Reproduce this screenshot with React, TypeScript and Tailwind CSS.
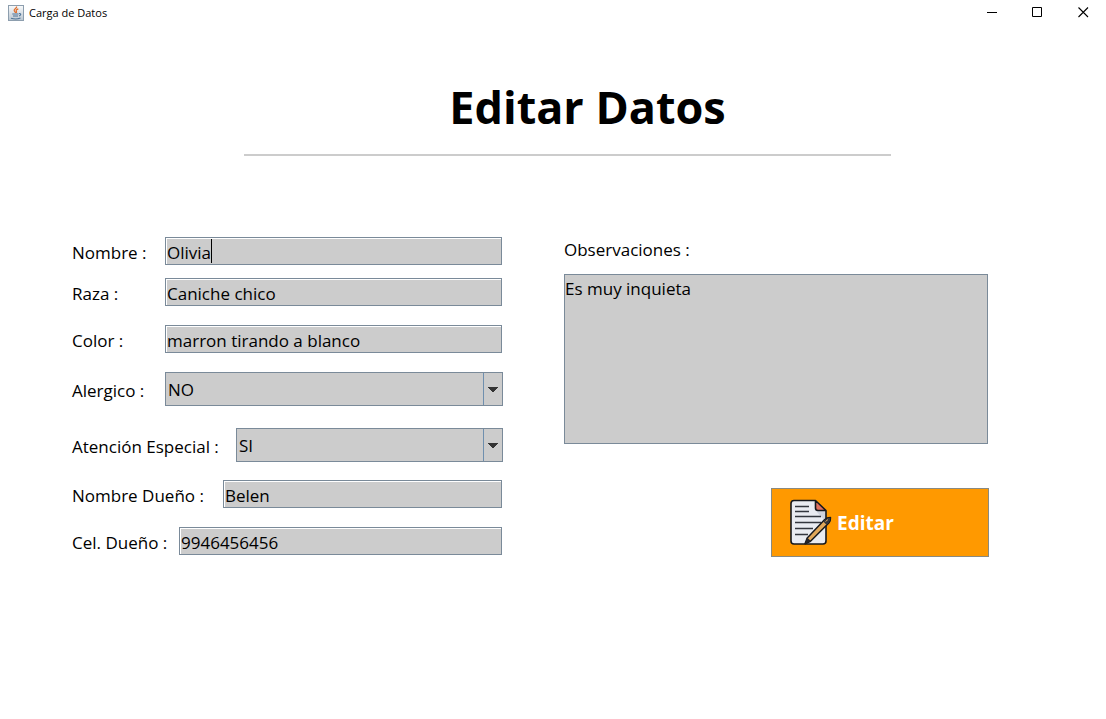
import type { ReactNode } from "react";

const fieldClass =
  "block h-7 w-full min-w-0 border border-[#7a8a99] bg-[#cccccc] px-px pt-[2px] shadow-[inset_1px_1px_0_#ffffff] outline-none";

type RowProps = {
  id: string;
  label: string;
  labelWidth: string;
  className?: string;
  children: ReactNode;
};

function Row({ id, label, labelWidth, className = "", children }: RowProps) {
  return (
    <div className={`flex items-center ${className}`}>
      <label htmlFor={id} className={`shrink-0 whitespace-nowrap pt-[4px] ${labelWidth}`}>
        {label}
      </label>
      <div className="relative min-w-0 flex-1">{children}</div>
    </div>
  );
}

function TextField({ id, value }: { id: string; value: string }) {
  return (
    <div className="pr-px">
      <input id={id} type="text" defaultValue={value} className={fieldClass} />
    </div>
  );
}

function SelectField({ id, value }: { id: string; value: string }) {
  return (
    <>
      <select
        id={id}
        defaultValue={value}
        className="block h-[34px] w-full appearance-none border border-[#7a8a99] bg-[#cccccc] pt-[2px] pr-6 pl-[2px] outline-none"
      >
        <option>NO</option>
        <option>SI</option>
      </select>
      <span className="pointer-events-none absolute inset-y-px right-px flex w-[19px] items-center justify-center border-l border-[#6f8fae]">
        <svg width="10" height="5" viewBox="0 0 10 5" shapeRendering="crispEdges" aria-hidden="true">
          <path d="M0 0h10v1h-1v1h-1v1h-1v1h-1v1h-2v-1h-1v-1h-1v-1h-1v-1h-1z" fill="#333333" />
        </svg>
      </span>
    </>
  );
}

function JavaIcon() {
  return (
    <svg width="16" height="16" viewBox="0 0 16 16" fill="none" aria-hidden="true">
      <defs>
        <linearGradient id="tile" x1="0" y1="0" x2="0" y2="1">
          <stop offset="0" stopColor="#fafbfc" />
          <stop offset="1" stopColor="#b9c5d0" />
        </linearGradient>
      </defs>
      <rect x=".5" y=".5" width="15" height="15" fill="url(#tile)" stroke="#8d9eae" />
      <path d="M8.500 1.500c1 1.500-2.800 2.500-2.300 4.200.2.800 1.300 1.400 1.300 2.300M10.300 3.800c-1.500.6-2.500 1.300-2 2.200.4.700.4 1-.1 1.800" stroke="#e0702f" strokeWidth="1.300" />
      <path d="M4.300 9h6.200M5 11h5M3 13.300c3 .9 7 .8 9.500-.3M11 8.600c2.200-.4 2.500 1.700 0 2.400" stroke="#4f7396" strokeWidth="1.100" />
    </svg>
  );
}

function DocumentIcon() {
  return (
    <svg width="42" height="48" viewBox="0 0 42 48" fill="none" strokeLinejoin="round" aria-hidden="true">
      <path d="M4 1.500h22l10 10V42q0 3-3 3H4q-3 0-3-3V4.500q0-3 3-3z" fill="#e9ebf1" />
      <path d="M26 12h10v11L26 12z" fill="#cfd3de" />
      <path d="M25.500 1.500V9q0 2.500 2.500 2.500h8z" fill="#e0705f" />
      <path d="M4 1.500h21.500l10.500 10V42q0 3-3 3H4q-3 0-3-3V4.500q0-3 3-3zM25.500 1.500V9q0 2.500 2.500 2.500h8" stroke="#16181d" strokeWidth="1.600" />
      <path d="M5 7.500h14M5 12.500h14M5 17.500h26M5 23.500h26M5 29.500h18M5 35.500h13" stroke="#33363e" strokeWidth="1.500" />
      <path d="M15 44.800l2.200-5.800L34.500 20.800q2.500-2.300 6-2.300.3 3-1.700 5.500L20.500 42.200z" fill="#e0a75a" stroke="#16181d" strokeWidth="1.500" />
      <path d="M33 22.300l3.500 3.500 2.300-2.300q1.500-2 1.400-4.500-3 .3-5 1.800z" fill="#35353a" />
      <path d="M35.500 22.500l2.500-2" stroke="#e0a75a" strokeWidth="1" />
      <path d="M17.200 38.500l3.800 3.800-6 2.700z" fill="#24252a" />
    </svg>
  );
}

export default function App() {
  return (
    <div className="min-h-screen bg-white font-['Open_Sans','Noto_Sans',sans-serif] text-[17px] leading-6 text-black">
      <header className="flex h-[25px] items-center justify-between pl-2">
        <div className="flex items-center gap-[5px] text-[11px] leading-4">
          <JavaIcon />
          <span>Carga de Datos</span>
        </div>
        <div className="flex">
          <button type="button" aria-label="Minimizar" className="flex h-6 w-[46px] items-center justify-center">
            <svg width="12" height="12" viewBox="0 0 12 12" aria-hidden="true">
              <path d="M1 5.500h10" stroke="#000" />
            </svg>
          </button>
          <button type="button" aria-label="Maximizar" className="flex h-6 w-[45px] items-center justify-center">
            <svg width="11" height="11" viewBox="0 0 11 11" fill="none" aria-hidden="true">
              <path d="M.5.5h9v9h-9z" stroke="#000" />
            </svg>
          </button>
          <button type="button" aria-label="Cerrar" className="flex h-6 w-[46px] items-center justify-center">
            <svg width="11" height="11" viewBox="0 0 11 11" aria-hidden="true">
              <path d="M.5.5l9.500 9.500M10 .5l-9.500 9.500" stroke="#000" strokeWidth="1.100" />
            </svg>
          </button>
        </div>
      </header>

      <main>
        <div className="mr-[215px] ml-[244px] border-b-2 border-[#cccccc] pt-[50px] pb-[15px]">
          <h1 className="pl-10 text-center text-[45px] leading-[64px] font-bold whitespace-nowrap">Editar Datos</h1>
        </div>

        <form
          className="mt-[81px] grid grid-cols-[431fr_425fr] items-start gap-[61px] pr-[117px] pl-[72px]"
          onSubmit={(e) => e.preventDefault()}
        >
          <div className="flex min-w-0 flex-col">
            <Row id="nombre" label="Nombre :" labelWidth="w-[93px]">
              <TextField id="nombre" value="Olivia" />
              <span className="absolute top-[2px] left-[46px] h-6 w-px bg-black" />
            </Row>
            <Row id="raza" label="Raza :" labelWidth="w-[93px]" className="mt-[13px]">
              <TextField id="raza" value="Caniche chico" />
            </Row>
            <Row id="color" label="Color :" labelWidth="w-[93px]" className="mt-[19px]">
              <TextField id="color" value="marron tirando a blanco" />
            </Row>
            <Row id="alergico" label="Alergico :" labelWidth="w-[93px]" className="mt-[19px]">
              <SelectField id="alergico" value="NO" />
            </Row>
            <Row id="atencion" label="Atención Especial :" labelWidth="w-[164px]" className="mt-[22px]">
              <SelectField id="atencion" value="SI" />
            </Row>
            <Row id="dueno" label="Nombre Dueño :" labelWidth="w-[151px]" className="mt-[18px]">
              <TextField id="dueno" value="Belen" />
            </Row>
            <Row id="cel" label="Cel. Dueño :" labelWidth="w-[107px]" className="mt-[19px]">
              <TextField id="cel" value="9946456456" />
            </Row>
          </div>

          <div className="flex min-w-0 flex-col">
            <label htmlFor="observaciones" className="pt-px">
              Observaciones :
            </label>
            <div className="mt-[12px] pr-px">
              <textarea
                id="observaciones"
                defaultValue="Es muy inquieta"
                className="block h-[170px] w-full resize-none border border-[#7a8a99] bg-[#cccccc] pt-[2px] outline-none"
              />
            </div>
            <button
              type="submit"
              className="mt-[44px] flex h-[69px] w-[218px] items-center gap-[5px] self-end border border-[#8a8a80] bg-[#ff9900] pl-[18px] text-[19px] font-bold text-white"
            >
              <DocumentIcon />
              Editar
            </button>
          </div>
        </form>
      </main>
    </div>
  );
}
